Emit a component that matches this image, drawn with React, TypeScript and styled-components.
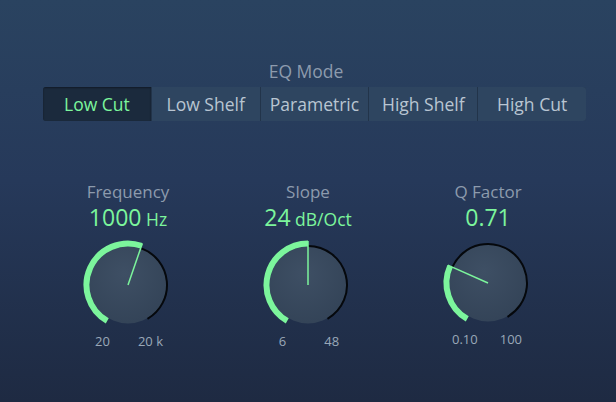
import React from "react";
import styled, { createGlobalStyle } from "styled-components";

const GlobalStyle = createGlobalStyle`
  html, body {
    margin: 0;
    padding: 0;
    background: #1f2b42;
  }
`;

const green = "#7cf59c";
const labelColor = "#8d9bad";

const Panel = styled.div`
  width: 616px;
  height: 402px;
  box-sizing: border-box;
  background: linear-gradient(180deg, #2a4360 0%, #26395a 45%, #1e2a42 100%);
  font-family: "Open Sans", "Liberation Sans", sans-serif;
  display: flex;
  flex-direction: column;
  align-items: flex-start;
  padding-top: 61px;
  overflow: hidden;
`;

const ModeTitle = styled.div`
  align-self: center;
  margin-left: -4px;
  font-size: 17.5px;
  line-height: 20px;
  color: ${labelColor};
`;

const SegmentBar = styled.div`
  display: flex;
  gap: 1px;
  margin: 6px 0 0 43px;
  width: 543px;
  height: 34px;
  border-radius: 3px;
  overflow: hidden;
  background: #22344a;
`;

const Segment = styled.div<{ active?: boolean }>`
  flex: 1;
  display: flex;
  align-items: center;
  justify-content: center;
  font-size: 17.5px;
  color: ${p => (p.active ? green : "#b9c5d2")};
  background: ${p => (p.active ? "#1b2a3d" : "#2e4560")};
  box-shadow: ${p => (p.active ? "inset 0 1px 2px rgba(0,0,0,0.4)" : "none")};
`;

const KnobRow = styled.div`
  display: grid;
  grid-template-columns: repeat(3, 180px);
  margin: 60px 0 0 38px;
`;

const KnobCell = styled.div`
  display: flex;
  flex-direction: column;
  align-items: center;
`;

const KnobLabel = styled.div`
  font-size: 17px;
  line-height: 22px;
  color: ${labelColor};
`;

const KnobValue = styled.div`
  font-size: 23px;
  line-height: 28px;
  color: ${green};
  span {
    font-size: 17.5px;
  }
`;

const Dial = styled.svg`
  display: block;
  margin-top: 2px;
`;

const RangeLabels = styled.div<{ spread: number; shift: number }>`
  display: flex;
  justify-content: center;
  gap: ${p => p.spread}px;
  margin: -3px 0 0 ${p => p.shift}px;
  font-size: 13px;
  color: #9aa8b8;
`;

function polar(cx: number, cy: number, r: number, deg: number) {
  const a = ((deg - 90) * Math.PI) / 180;
  return [cx + r * Math.cos(a), cy + r * Math.sin(a)];
}

function arc(cx: number, cy: number, r: number, from: number, to: number) {
  const [x1, y1] = polar(cx, cy, r, from);
  const [x2, y2] = polar(cx, cy, r, to);
  const large = to - from > 180 ? 1 : 0;
  return `M ${x1} ${y1} A ${r} ${r} 0 ${large} 1 ${x2} ${y2}`;
}

function Knob({ angle }: { angle: number }) {
  const c = 50;
  const start = -150;
  const end = 150;
  const [px, py] = polar(c, c, 44, angle);
  return (
    <Dial width="100" height="100" viewBox="0 0 100 100">
      <defs>
        <radialGradient id="disk" cx="45%" cy="35%" r="70%">
          <stop offset="0%" stopColor="#3e4f64" />
          <stop offset="100%" stopColor="#334357" />
        </radialGradient>
      </defs>
      <circle cx={c} cy={c} r={38.5} fill="url(#disk)" />
      <path d={arc(c, c, 39, angle, end)} stroke="#05080c" strokeWidth={2} fill="none" />
      <path d={arc(c, c, 41.5, start, angle)} stroke={green} strokeWidth={6} fill="none" />
      <line x1={c} y1={c} x2={px} y2={py} stroke={green} strokeWidth={1.5} />
    </Dial>
  );
}

const knobs = [
  { label: "Frequency", value: "1000", unit: "Hz", angle: 19, min: "20", max: "20 k", spread: 28, shift: 2 },
  { label: "Slope", value: "24", unit: "dB/Oct", angle: 0, min: "6", max: "48", spread: 38, shift: 2 },
  { label: "Q Factor", value: "0.71", unit: "", angle: -66, min: "0.10", max: "100", spread: 22, shift: -2 },
];

const modes = ["Low Cut", "Low Shelf", "Parametric", "High Shelf", "High Cut"];

export default function App() {
  return (
    <>
      <GlobalStyle />
      <Panel>
        <ModeTitle>EQ Mode</ModeTitle>
        <SegmentBar>
          {modes.map((m, i) => (
            <Segment key={m} active={i === 0}>
              {m}
            </Segment>
          ))}
        </SegmentBar>
        <KnobRow>
          {knobs.map(k => (
            <KnobCell key={k.label}>
              <KnobLabel>{k.label}</KnobLabel>
              <KnobValue>
                {k.value}
                {k.unit && <span> {k.unit}</span>}
              </KnobValue>
              <Knob angle={k.angle} />
              <RangeLabels spread={k.spread} shift={k.shift}>
                <span>{k.min}</span>
                <span>{k.max}</span>
              </RangeLabels>
            </KnobCell>
          ))}
        </KnobRow>
      </Panel>
    </>
  );
}
